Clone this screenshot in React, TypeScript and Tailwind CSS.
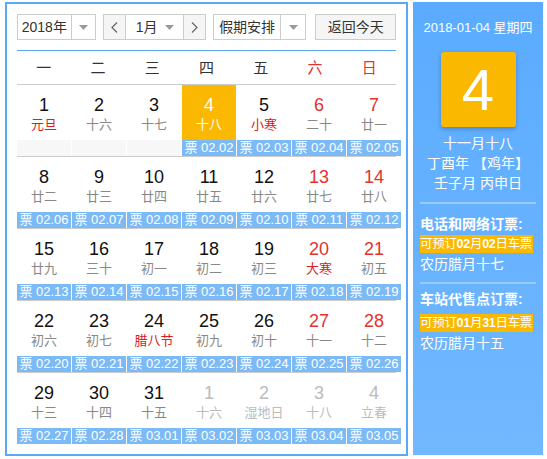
const cjk = { fontFamily: '"Liberation Sans", "Noto Sans CJK SC", sans-serif' };

type Day = { n: number; lunar: string; red?: boolean; fest?: boolean; other?: boolean; today?: boolean; ticket?: string };

const weeks: Day[][] = [
  [
    { n: 1, lunar: "元旦", fest: true },
    { n: 2, lunar: "十六" },
    { n: 3, lunar: "十七" },
    { n: 4, lunar: "十八", today: true, ticket: "02.02" },
    { n: 5, lunar: "小寒", fest: true, ticket: "02.03" },
    { n: 6, lunar: "二十", red: true, ticket: "02.04" },
    { n: 7, lunar: "廿一", red: true, ticket: "02.05" },
  ],
  [
    { n: 8, lunar: "廿二", ticket: "02.06" },
    { n: 9, lunar: "廿三", ticket: "02.07" },
    { n: 10, lunar: "廿四", ticket: "02.08" },
    { n: 11, lunar: "廿五", ticket: "02.09" },
    { n: 12, lunar: "廿六", ticket: "02.10" },
    { n: 13, lunar: "廿七", red: true, ticket: "02.11" },
    { n: 14, lunar: "廿八", red: true, ticket: "02.12" },
  ],
  [
    { n: 15, lunar: "廿九", ticket: "02.13" },
    { n: 16, lunar: "三十", ticket: "02.14" },
    { n: 17, lunar: "初一", ticket: "02.15" },
    { n: 18, lunar: "初二", ticket: "02.16" },
    { n: 19, lunar: "初三", ticket: "02.17" },
    { n: 20, lunar: "大寒", red: true, fest: true, ticket: "02.18" },
    { n: 21, lunar: "初五", red: true, ticket: "02.19" },
  ],
  [
    { n: 22, lunar: "初六", ticket: "02.20" },
    { n: 23, lunar: "初七", ticket: "02.21" },
    { n: 24, lunar: "腊八节", fest: true, ticket: "02.22" },
    { n: 25, lunar: "初九", ticket: "02.23" },
    { n: 26, lunar: "初十", ticket: "02.24" },
    { n: 27, lunar: "十一", red: true, ticket: "02.25" },
    { n: 28, lunar: "十二", red: true, ticket: "02.26" },
  ],
  [
    { n: 29, lunar: "十三", ticket: "02.27" },
    { n: 30, lunar: "十四", ticket: "02.28" },
    { n: 31, lunar: "十五", ticket: "03.01" },
    { n: 1, lunar: "十六", other: true, ticket: "03.02" },
    { n: 2, lunar: "湿地日", other: true, ticket: "03.03" },
    { n: 3, lunar: "十八", other: true, ticket: "03.04" },
    { n: 4, lunar: "立春", other: true, ticket: "03.05" },
  ],
];

const weekdays = ["一", "二", "三", "四", "五", "六", "日"];

function Caret() {
  return (
    <svg width="9" height="5" viewBox="0 0 9 5">
      <path d="M0 0h9L4.5 5z" fill="#999" />
    </svg>
  );
}

function Toolbar() {
  return (
    <div className="flex h-[26px] text-[14px] text-[#333]">
      <div className="flex w-[80px] border border-[#ccc] bg-white">
        <div className="flex flex-1 items-center justify-center">2018年</div>
        <div className="flex w-[24px] items-center justify-center border-l border-[#ccc]">
          <Caret />
        </div>
      </div>
      <div className="ml-[7px] flex w-[105px] border border-[#ccc] bg-white">
        <div className="flex w-[22px] items-center justify-center border-r border-[#ccc] bg-[#f5f5f5] text-[#666]">
          <svg width="7" height="11" viewBox="0 0 7 11">
            <path d="M6 0.5L1 5.5l5 5" fill="none" stroke="#666" strokeWidth="1.2" />
          </svg>
        </div>
        <div className="flex flex-1 items-center justify-between pl-[10px] pr-[9px]">
          <span>1月</span>
          <Caret />
        </div>
        <div className="flex w-[22px] items-center justify-center border-l border-[#ccc] bg-[#f5f5f5]">
          <svg width="7" height="11" viewBox="0 0 7 11">
            <path d="M1 0.5l5 5-5 5" fill="none" stroke="#666" strokeWidth="1.2" />
          </svg>
        </div>
      </div>
      <div className="ml-[7px] flex w-[95px] border border-[#ccc] bg-white">
        <div className="flex flex-1 items-center justify-center">假期安排</div>
        <div className="flex w-[25px] items-center justify-center border-l border-[#ccc]">
          <Caret />
        </div>
      </div>
      <div className="ml-[9px] flex w-[82px] items-center justify-center border border-[#ccc] bg-[#f5f5f5]">
        返回今天
      </div>
    </div>
  );
}

function Cell({ d }: { d: Day }) {
  const numColor = d.today ? "text-white" : d.other ? "text-[#bbb]" : d.red ? "text-[#e4322c]" : "text-[#111]";
  const lunarColor = d.today ? "text-white" : d.other ? "text-[#bbb]" : d.fest ? "text-[#d9201e]" : "text-[#888]";
  return (
    <div className="flex flex-col">
      <div className={`flex h-[55px] flex-col items-center pt-[10px] ${d.today ? "bg-[#fbb800]" : ""}`}>
        <div className={`text-[18px] leading-[20px] ${numColor}`} style={{ fontFamily: '"Liberation Sans", Arial, sans-serif' }}>
          {d.n}
        </div>
        <div className={`text-[13px] leading-[20px] ${lunarColor}`}>{d.lunar}</div>
      </div>
      {d.ticket ? (
        <div className="flex h-[16px] items-center justify-center bg-[#7cbaf6] text-[13px] leading-[16px] text-white">
          票 {d.ticket}
        </div>
      ) : (
        <div className="h-[16px] bg-[#f7f7f7]" />
      )}
    </div>
  );
}

function SidePanel() {
  return (
    <div className="ml-[5px] flex h-[453px] w-[130px] flex-col bg-gradient-to-b from-[#5aabff] to-[#72b8ff] px-[7px] text-white">
      <div className="mt-[17px] text-center text-[13px] leading-[18px]">2018-01-04 星期四</div>
      <div className="mx-auto mt-[15px] flex h-[75px] w-[75px] items-center justify-center rounded-[3px] bg-[#fbb800] text-[58px] leading-none shadow-[0_2px_4px_rgba(0,0,0,0.25)]">
        4
      </div>
      <div className="mt-[6px] text-center text-[14px] leading-[20px]">十一月十八</div>
      <div className="text-center text-[14px] leading-[20px]">丁酉年 【鸡年】</div>
      <div className="text-center text-[14px] leading-[20px]">壬子月 丙申日</div>
      <div className="mt-[9px] h-[2px] bg-[#98ccff]" />
      <div className="mt-[10px] text-[14px] font-bold leading-[20px]">电话和网络订票:</div>
      <div className="mt-[1px] h-[18px] w-fit whitespace-nowrap bg-[#fbb800] pr-[1px] text-[12.5px] leading-[18px] tracking-[-0.3px]">
        可预订<b>02</b>月<b>02</b>日车票
      </div>
      <div className="mt-[1px] text-[14px] leading-[20px]">农历腊月十七</div>
      <div className="mt-[8px] h-[2px] bg-[#98ccff]" />
      <div className="mt-[5px] text-[14px] font-bold leading-[20px]">车站代售点订票:</div>
      <div className="mt-[5px] h-[18px] w-fit whitespace-nowrap bg-[#fbb800] pr-[1px] text-[12.5px] leading-[18px] tracking-[-0.3px]">
        可预订<b>01</b>月<b>31</b>日车票
      </div>
      <div className="mt-[1px] text-[14px] leading-[20px]">农历腊月十五</div>
    </div>
  );
}

export default function App() {
  return (
    <div className="h-[459px] w-[547px] bg-white" style={cjk}>
      <div className="flex pt-[2px] pl-[5px]">
        <div className="h-[454px] w-[403px] border-2 border-[#5aa9f5] px-[10px] pt-[10px]">
          <Toolbar />
          <div className="mt-[10px] h-[1px] bg-[#5aa9f5]" />
          <div className="grid h-[34px] grid-cols-7 gap-x-[1px] border-b border-[#ccc] text-[15px]">
            {weekdays.map((w, i) => (
              <div key={w} className={`flex items-center justify-center pt-[1px] ${i >= 5 ? "text-[#e4322c]" : "text-[#333]"}`}>
                {w}
              </div>
            ))}
          </div>
          {weeks.map((wk, i) => (
            <div
              key={i}
              className={`grid grid-cols-[repeat(7,54px)] gap-x-[1px] ${i < weeks.length - 1 ? "border-b border-[#ccc]" : ""}`}
            >
              {wk.map((d, j) => (
                <Cell key={j} d={d} />
              ))}
            </div>
          ))}
        </div>
        <SidePanel />
      </div>
    </div>
  );
}
